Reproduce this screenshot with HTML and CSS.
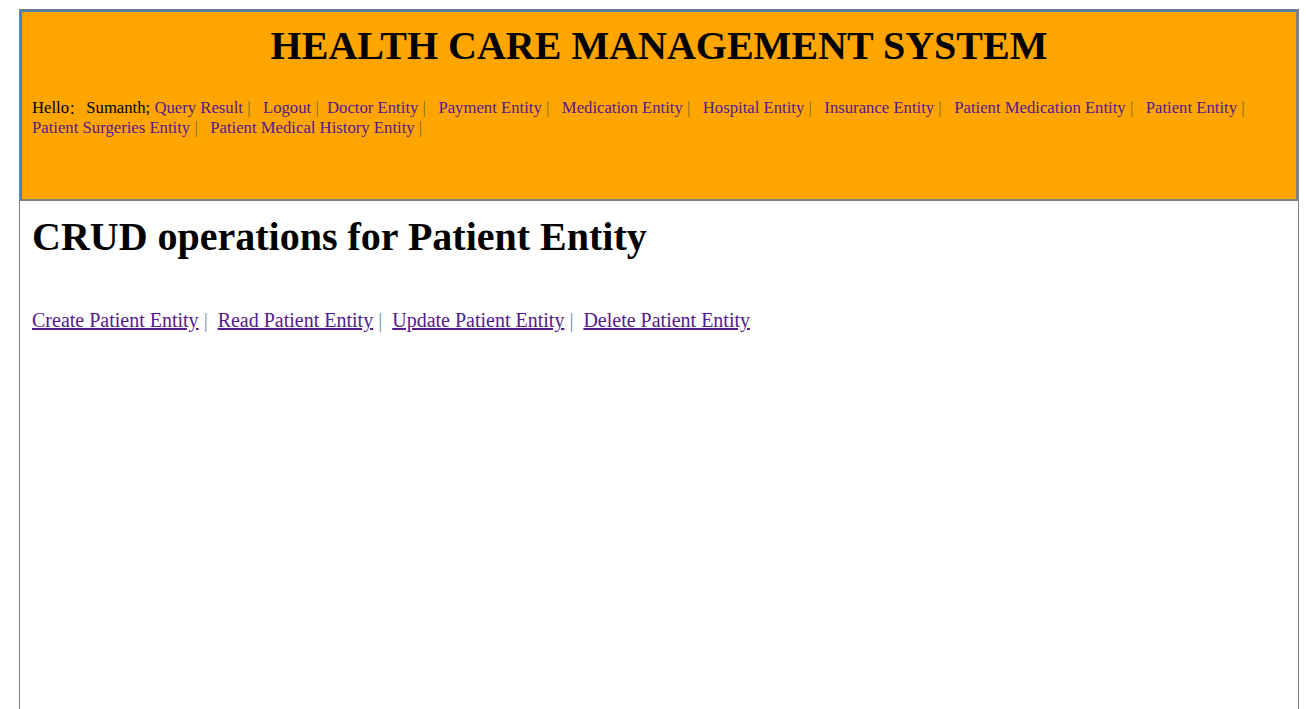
FILE: index.html
```html
<!DOCTYPE html>
<html>
<head>
<meta charset="utf-8">
<title>Health Care Management System</title>
<link rel="stylesheet" href="styles.css">
</head>
<body>
<div class="frame">
  <header class="banner">
    <h1 class="site-title">HEALTH CARE MANAGEMENT SYSTEM</h1>
    <nav class="nav">
      <span class="greet">Hello<span class="cjk">：</span> Sumanth;</span> <a href="#">Query Result</a>&nbsp;<span class="sep">|</span>&nbsp;&nbsp; <a href="#">Logout</a>&nbsp;<span class="sep">|</span>&nbsp; <a href="#">Doctor Entity</a>&nbsp;<span class="sep">|</span>&nbsp;&nbsp; <a href="#">Payment Entity</a>&nbsp;<span class="sep">|</span>&nbsp;&nbsp; <a href="#">Medication Entity</a>&nbsp;<span class="sep">|</span>&nbsp;&nbsp; <a href="#">Hospital Entity</a>&nbsp;<span class="sep">|</span>&nbsp;&nbsp; <a href="#">Insurance Entity</a>&nbsp;<span class="sep">|</span>&nbsp;&nbsp; <a href="#">Patient Medication Entity</a>&nbsp;<span class="sep">|</span>&nbsp;&nbsp; <a href="#">Patient Entity</a>&nbsp;<span class="sep">|</span>&nbsp;&nbsp; <a href="#">Patient Surgeries Entity</a>&nbsp;<span class="sep">|</span>&nbsp;&nbsp; <a href="#">Patient Medical History Entity</a>&nbsp;<span class="sep">|</span>
    </nav>
  </header>
  <main class="content">
    <h1 class="page-title">CRUD operations for Patient Entity</h1>
    <p class="crud-links"><a href="#">Create Patient Entity</a>&nbsp;<span class="sep">|</span>&nbsp; <a href="#">Read Patient Entity</a>&nbsp;<span class="sep">|</span>&nbsp; <a href="#">Update Patient Entity</a>&nbsp;<span class="sep">|</span>&nbsp; <a href="#">Delete Patient Entity</a></p>
  </main>
</div>
</body>
</html>
```
FILE: styles.css
```css
html {
  overflow: hidden;
}

body {
  margin: 0;
  font-family: "Liberation Serif", "Times New Roman", serif;
  color: #000;
  background: #fff;
}

.frame {
  margin: 9px 7px 0 19px;
  border: 1px solid #808080;
  height: 760px;
}

.banner {
  background: #ffa500;
  border-top: 2px solid #4682b4;
  border-left: 2px solid #4682b4;
  border-right: 2px solid #808080;
  border-bottom: 2px solid #808080;
  height: 187px;
  box-sizing: content-box;
  padding: 0 10px;
}

.site-title {
  margin: 11px 0 0;
  font-size: 40px;
  font-weight: bold;
  text-align: center;
  line-height: 46px;
}

.nav {
  margin-top: 29px;
  font-size: 16.7px;
  line-height: 20px;
}

.nav a {
  color: #551a8b;
  text-decoration: none;
}

.cjk {
  font-family: "Noto Sans CJK SC", sans-serif;
  font-size: 13px;
}

.sep {
  color: #7a6a28;
}

.content {
  padding: 0 12px;
}

.page-title {
  margin: 13px 0 0;
  font-size: 40px;
  font-weight: bold;
  line-height: 46px;
}

.crud-links {
  margin: 49px 0 0;
  font-size: 20px;
  line-height: 23px;
}

.crud-links a {
  color: #551a8b;
  text-decoration: underline;
}

.crud-links .sep {
  color: #6f8fb0;
}
```
